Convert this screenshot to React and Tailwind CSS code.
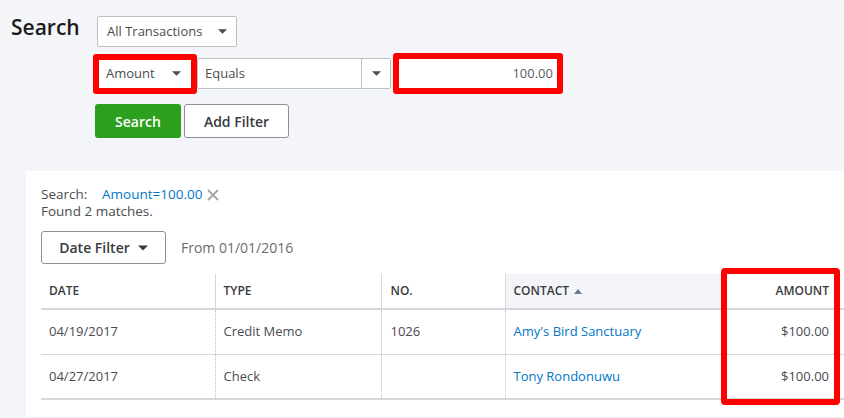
const Caret = ({ className = 'w-[9px] h-[5px]' }) => (
  <svg viewBox="0 0 10 5" className={className}>
    <path d="M0 0h10L5 5z" fill="currentColor" />
  </svg>
)

const rows = [
  { date: '04/19/2017', type: 'Credit Memo', no: '1026', contact: "Amy's Bird Sanctuary", amount: '$100.00' },
  { date: '04/27/2017', type: 'Check', no: '', contact: 'Tony Rondonuwu', amount: '$100.00' },
]

export default function App() {
  return (
    <div
      className="relative w-[844px] h-[418px] overflow-hidden bg-[#f4f5f8] text-[#393a3d]"
      style={{ fontFamily: '"Open Sans", Lato, sans-serif' }}
    >
      <div className="flex">
        <h1 className="w-[93px] pl-[11px] pt-[13px] text-[21px] leading-[28px] font-semibold text-[#1c1c1c]">Search</h1>

        <div className="flex flex-col">
          {/* transaction type */}
          <div className="mt-[16px] ml-[4px] w-[140px] h-[31px] flex items-center justify-between px-[9px] bg-white border border-[#babec5] rounded-[2px] text-[13px] text-[#4a4b50]">
            <span>All Transactions</span>
            <Caret />
          </div>

          {/* filter row */}
          <div className="mt-[6px] flex items-center">
            <div className="w-[104px] h-[40px] border-[6px] border-[#ff0000] rounded-[3px] bg-white flex items-center justify-between pl-[7px] pr-[10px] text-[13px] text-[#4a4b50]">
              <span>Amount</span>
              <Caret />
            </div>
            <div className="w-[194px] h-[31px] flex bg-white border border-[#babec5] rounded-[2px] text-[13px] text-[#4a4b50]">
              <div className="flex-1 flex items-center pl-[7px]">Equals</div>
              <div className="w-[29px] border-l border-[#babec5] flex items-center justify-center">
                <Caret />
              </div>
            </div>
            <div className="ml-[2px] w-[170px] h-[41px] border-[6px] border-[#ff0000] rounded-[3px] bg-white flex items-center justify-end pr-[4px] text-[13px] text-[#5c5d62]">
              100.00
            </div>
          </div>

          {/* actions */}
          <div className="mt-[10px] ml-[2px] flex gap-[3px]">
            <button className="w-[86px] h-[34px] rounded-[3px] bg-[#2ca01c] text-white text-[14px] font-semibold">Search</button>
            <button className="w-[105px] h-[34px] rounded-[3px] bg-white border border-[#8d9096] text-[14px] font-semibold text-[#393a3d]">Add Filter</button>
          </div>
        </div>
      </div>

      {/* results */}
      <div className="mt-[33px] ml-[26px] h-[246px] bg-white pl-[15px] pt-[15px]">
        <div className="text-[13.5px] leading-[17px] text-[#4a4b50]">
          <div className="flex items-center">
            <span className="w-[61px]">Search:</span>
            <span className="text-[#0077c5]">Amount=100.00</span>
            <svg viewBox="0 0 12 12" className="ml-[5px] w-[12px] h-[12px] text-[#a2a5ab]">
              <path d="M1 1l10 10M11 1L1 11" stroke="currentColor" strokeWidth="1.8" />
            </svg>
          </div>
          <div>Found 2 matches.</div>
        </div>

        <div className="mt-[11px] flex items-center">
          <button className="w-[125px] h-[33px] flex items-center justify-center gap-[8px] rounded-[3px] border border-[#8d9096] text-[14px] font-semibold text-[#393a3d]">
            Date Filter
            <Caret className="w-[10px] h-[6px]" />
          </button>
          <span className="ml-[15px] text-[14px] text-[#6b6c72]">From 01/01/2016</span>
        </div>

        <table className="mt-[10px] w-[803px] border-collapse text-[13px]">
          <thead>
            <tr className="h-[35px] border-b-2 border-[#d4d7dc] text-[12px] text-[#393a3d]">
              <th className="w-[174px] pl-[8px] text-left font-semibold">DATE</th>
              <th className="w-[166px] pl-[8px] text-left font-semibold border-l border-[#d4d7dc]">TYPE</th>
              <th className="w-[124px] pl-[9px] text-left font-semibold border-l border-[#d4d7dc]">NO.</th>
              <th className="w-[217px] pl-[8px] text-left font-semibold border-l border-[#d4d7dc] bg-[#f4f5f8]">
                <span className="inline-flex items-center gap-[5px]">
                  CONTACT
                  <svg viewBox="0 0 8 5" className="w-[8px] h-[5px] text-[#6b7a90]">
                    <path d="M0 5h8L4 0z" fill="currentColor" />
                  </svg>
                </span>
              </th>
              <th className="pr-[15px] text-right font-semibold">AMOUNT</th>
            </tr>
          </thead>
          <tbody className="text-[#4a4b50]">
            {rows.map((r, i) => (
              <tr
                key={r.date}
                className={`h-[45px] ${i === rows.length - 1 ? 'border-b-2' : 'border-b'} border-[#d4d7dc]`}
              >
                <td className="pl-[8px]">{r.date}</td>
                <td className="pl-[8px] border-l border-dotted border-[#babec5]">{r.type}</td>
                <td className="pl-[9px] border-l border-dotted border-[#babec5]">{r.no}</td>
                <td className="pl-[8px] border-l border-dotted border-[#babec5] text-[#0077c5]">{r.contact}</td>
                <td className="pr-[15px] text-right">{r.amount}</td>
              </tr>
            ))}
          </tbody>
        </table>
      </div>

      {/* annotation around amount column */}
      <div className="absolute left-[721px] top-[268px] w-[119px] h-[137px] border-[6px] border-[#ff0000] rounded-[4px]" />
    </div>
  )
}
